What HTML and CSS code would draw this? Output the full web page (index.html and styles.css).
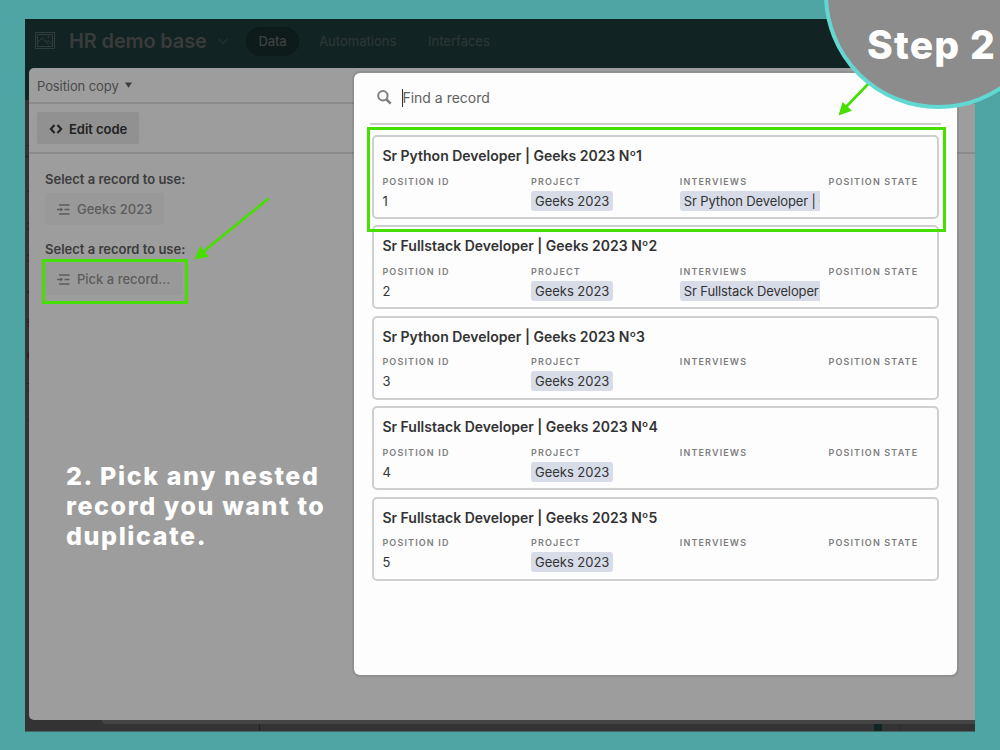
FILE: index.html
```
<!DOCTYPE html>
<html lang="en">
  <head>
    <meta charset="UTF-8" />
    <meta name="viewport" content="width=device-width, initial-scale=1.0" />
    <title>Step 2 - Pick a record</title>
    <link rel="stylesheet" href="styles.css">
  </head>
  <body>
    <div class="slide">
      <div class="app">
        <header class="topbar">
          <svg class="logo" width="20" height="17" viewBox="0 0 20 17" fill="none" stroke="currentColor">
            <rect x=".5" y=".5" width="19" height="16" />
            <path d="M2.500 2.500h15v12h-15zM3 10l4.200-4.200 6.300 7M11 10.500l2.200-2.200 4 4.200" />
            <circle cx="13.500" cy="5" r=".7" fill="currentColor" />
          </svg>
          <span class="base-name">HR demo base</span>
          <svg class="chevron" width="10" height="7" viewBox="0 0 10 7" fill="none" stroke="currentColor" stroke-width="1.5">
            <path d="M.5 1l4.500 4.500L9.500 1" />
          </svg>
          <nav class="tabs">
            <span class="tab active">Data</span>
            <span class="tab automations">Automations</span>
            <span class="tab">Interfaces</span>
          </nav>
        </header>

        <div class="workspace">
          <div class="row-numbers">
            <span>1</span><span>2</span><span>3</span><span>4</span><span>5</span><span>6</span><span>7</span><span>+</span>
          </div>
          <main class="panel">
            <div class="panel-title">
              <span class="panel-name">Position copy</span>
              <svg width="7" height="6" viewBox="0 0 7 6"><path d="M0 .5h7L3.500 5.800z" fill="#3f3f3f" /></svg>
            </div>
            <div class="panel-toolbar">
              <div class="button edit">
                <svg width="14" height="10" viewBox="0 0 14 10" fill="none" stroke="currentColor" stroke-width="2">
                  <path d="M5.500 1L1.800 5l3.700 4M8.500 1l3.700 4-3.700 4" />
                </svg>
                <span>Edit code</span>
              </div>
            </div>
            <div class="panel-body">
              <div class="prompt">Select a record to use:</div>
              <div class="button pick">
                <svg width="13" height="11" viewBox="0 0 13 11" fill="none" stroke="currentColor" stroke-width="1.500">
                  <path d="M2 1h10.500M0 5.500h5.200M7.500 5.500h5M2 10h10.500" /><path d="M3.500 3.500l2.500 2-2.500 2z" fill="currentColor" stroke="none" />
                </svg>
                <span>Geeks 2023</span>
              </div>
              <div class="prompt second">Select a record to use:</div>
              <div class="button pick">
                <svg width="13" height="11" viewBox="0 0 13 11" fill="none" stroke="currentColor" stroke-width="1.500">
                  <path d="M2 1h10.500M0 5.500h5.200M7.500 5.500h5M2 10h10.500" /><path d="M3.500 3.500l2.500 2-2.500 2z" fill="currentColor" stroke="none" />
                </svg>
                <span>Pick a record...</span>
              </div>
              <h2 class="caption">2. Pick any nested<br />record you want to<br />duplicate.</h2>
            </div>
          </main>
        </div>
        <footer class="grid-footer">
          <div class="scrollbar"></div>
          <div class="summary"><i class="divider"></i><i class="swatch"></i><i class="divider light"></i></div>
        </footer>
      </div>

      <section class="modal">
        <div class="search">
          <svg width="15" height="15" viewBox="0 0 15 15" fill="none" stroke="#808080" stroke-width="2">
            <circle cx="5.900" cy="5.700" r="4.700" /><path d="M9.500 9.500l4.200 4.200" stroke-width="2.600" />
          </svg>
          <span class="cursor"></span>
          <span class="placeholder">Find a record</span>
        </div>
        <div class="records" id="records"></div>
      </section>

      <div class="highlight record-highlight"></div>
      <div class="highlight pick-highlight"></div>
      <svg class="arrows" width="1000" height="750" viewBox="0 0 1000 750">
        <g stroke="#46df00" stroke-width="2.700">
          <path d="M268.500 198.500L203 252M871 81L845 108" />
        </g>
        <path d="M194.500 259.500l5.700-13.500 8.800 10.800zM838.500 115.500l4-13.500 9.500 8.700z" fill="#46df00" />
      </svg>
      <div class="badge"><span>Step 2</span></div>
    </div>

    <script>
      const records = [
        { name: "Sr Python Developer | Geeks 2023 Nº1", interview: "Sr Python Developer | Geeks 2023" },
        { name: "Sr Fullstack Developer | Geeks 2023 Nº2", interview: "Sr Fullstack Developer | Geeks 2023" },
        { name: "Sr Python Developer | Geeks 2023 Nº3" },
        { name: "Sr Fullstack Developer | Geeks 2023 Nº4" },
        { name: "Sr Fullstack Developer | Geeks 2023 Nº5" },
      ];

      document.getElementById("records").innerHTML = records
        .map(
          (r, i) => `
          <article class="record">
            <h3>${r.name}</h3>
            <div class="fields">
              <div class="field"><label>Position ID</label><p>${i + 1}</p></div>
              <div class="field"><label>Project</label><p><span class="tag">Geeks 2023</span></p></div>
              <div class="field"><label>Interviews</label><p>${r.interview ? `<span class="tag interview">${r.interview}</span>` : ""}</p></div>
              <div class="field"><label>Position state</label><p></p></div>
            </div>
          </article>`
        )
        .join("");
    </script>
  </body>
</html>
```

FILE: styles.css
```
* {
  box-sizing: border-box;
}

body {
  margin: 0;
  font-family: "Inter", "Liberation Sans", sans-serif;
  font-size: 13px;
}

.slide {
  position: relative;
  width: 1000px;
  height: 750px;
  padding: 19px 25px;
  overflow: hidden;
  background: #4ea5a3;
}

.app {
  height: 713px;
  overflow: hidden;
  background: linear-gradient(#112322 81px, #333 81px);
}

/* Top bar */
.topbar {
  display: flex;
  align-items: center;
  height: 49px;
  padding: 0 0 5px 10px;
  color: #303b3b;
}

.logo {
  margin-top: -1px;
}

.base-name {
  width: 138px;
  margin: 0 11px 0 14px;
  color: #3a3b3b;
  font-size: 20px;
  font-weight: 600;
  letter-spacing: -0.15px;
  white-space: nowrap;
}

.chevron {
  color: #253131;
}

.tabs {
  display: flex;
  align-items: center;
  margin-left: 18px;
  font-weight: 500;
  letter-spacing: -0.1px;
}

.tab {
  color: #2b3535;
}

.tab.active {
  width: 53px;
  margin-right: 20px;
  border: 1px solid #0b1a19;
  border-radius: 15px;
  background: #0d1c1b;
  color: #3c4141;
  line-height: 27px;
  text-align: center;
}

.automations {
  width: 109px;
}

/* Panel behind the modal */
.workspace {
  display: flex;
  height: 652px;
}

.row-numbers {
  display: flex;
  flex-direction: column;
  width: 4px;
  padding: 109px 0 0 2px;
  overflow: hidden;
  background: linear-gradient(#2a2a2a, #2a2a2a) 0 77px / 4px 1px no-repeat,
    linear-gradient(#222, #222) 0 88px / 4px 1px no-repeat;
  color: #171717;
  font-size: 10px;
}

.row-numbers span {
  height: 32.2px;
  border-top: 1px solid #2b2b2b;
  line-height: 32px;
}

.panel {
  flex: 1;
  border-radius: 5px 0 0 5px;
  background: #9d9d9d;
}

.panel-title {
  display: flex;
  align-items: center;
  gap: 7px;
  height: 36px;
  padding: 0 0 0 8px;
  border-bottom: 2px solid #8b8b8b;
  color: #4a4a4a;
}

.panel-name {
  width: 81px;
  padding-top: 1px;
  letter-spacing: -0.09px;
  white-space: nowrap;
}

.panel-toolbar {
  height: 50px;
  padding: 8px;
  border-bottom: 2px solid #8b8b8b;
}

.button {
  display: flex;
  align-items: center;
  height: 32px;
  border-radius: 3px;
  font-weight: 500;
  white-space: nowrap;
}

.edit {
  gap: 6px;
  width: 102px;
  padding: 1px 0 0 12px;
  background: #919191;
  color: #222;
  font-weight: 600;
  letter-spacing: -0.05px;
}

.panel-body {
  padding: 15px 16px;
}

.prompt {
  color: #3c3c3c;
  font-weight: 600;
  line-height: 20px;
}

.prompt.second {
  margin-top: 14px;
}

.pick {
  gap: 7px;
  width: 119px;
  margin-top: 4px;
  padding-left: 12px;
  background: #999;
  color: #5c5c5c;
}

.prompt.second + .pick {
  width: 137px;
}

.caption {
  margin: 166px 0 0 21px;
  color: #fff;
  font-size: 25px;
  font-weight: 800;
  letter-spacing: 1.63px;
  line-height: 30px;
  white-space: nowrap;
}

.grid-footer {
  height: 12px;
  border-bottom: 1px solid #456765;
}

.scrollbar {
  height: 4px;
  margin-left: 77px;
  border-radius: 0 0 0 4px;
  background: #444;
}

.summary {
  display: flex;
  height: 7px;
  padding-left: 234px;
}

.divider {
  width: 1px;
  background: #222;
}

.swatch {
  width: 8px;
  margin-left: 614px;
  background: #112624;
}

.divider.light {
  margin-left: 17px;
  background: #2c2c2c;
}

/* Record picker */
.modal {
  position: absolute;
  top: 72.5px;
  left: 354.4px;
  width: 602.6px;
  height: 602.5px;
  padding: 0 16px;
  border-radius: 6px;
  background: #fdfdfd;
  box-shadow: 0 0 0 2px rgba(0, 0, 0, 0.08);
}

.search {
  display: flex;
  align-items: center;
  height: 52.5px;
  padding-left: 7px;
  border-bottom: 2px solid #cdcdcd;
}

.cursor {
  width: 1px;
  height: 18px;
  margin-left: 10px;
  background: #333;
}

.placeholder {
  margin-left: -1px;
  color: #606060;
  font-size: 14px;
}

.records {
  display: flex;
  flex-direction: column;
  gap: 6.4px;
  padding: 10px 2px 0;
}

.record {
  height: 84px;
  padding: 8px 0 0 8px;
  border: 2px solid #cfcfcf;
  border-radius: 5px;
}

.record h3 {
  margin: 0;
  color: #333;
  font-size: 14px;
  font-weight: 600;
  line-height: 22px;
  white-space: nowrap;
}

.fields {
  display: grid;
  grid-template-columns: repeat(4, 140.5px);
  column-gap: 8.2px;
  margin-top: 8.6px;
}

.field {
  overflow: hidden;
  white-space: nowrap;
}

.field label {
  display: block;
  color: #7d7d7d;
  font-size: 9px;
  font-weight: 600;
  letter-spacing: 1.15px;
  line-height: 12px;
  text-transform: uppercase;
}

.field p {
  height: 20px;
  margin: 3px 0 0;
  color: #333;
  line-height: 20px;
}

.tag {
  display: inline-block;
  padding: 0 4px;
  border-radius: 3px;
  background: #d8dce9;
  letter-spacing: -0.04px;
}

.interview {
  letter-spacing: -0.12px;
}

/* Annotations */
.highlight {
  position: absolute;
  border: 3px solid #46df00;
}

.record-highlight {
  top: 127px;
  left: 367px;
  width: 579px;
  height: 105px;
}

.pick-highlight {
  top: 259px;
  left: 42px;
  width: 146px;
  height: 45px;
}

.arrows {
  position: absolute;
  top: 0;
  left: 0;
}

.badge {
  position: absolute;
  top: -120px;
  left: 824px;
  width: 229px;
  height: 229px;
  border: 4px solid #62d8d2;
  border-radius: 50%;
  background: #8c8c8c;
  color: #fff;
  font-size: 39px;
  font-weight: 800;
  letter-spacing: 1.2px;
  white-space: nowrap;
}

.badge span {
  display: block;
  margin: 137px 0 0 39px;
  line-height: 48px;
}
```
